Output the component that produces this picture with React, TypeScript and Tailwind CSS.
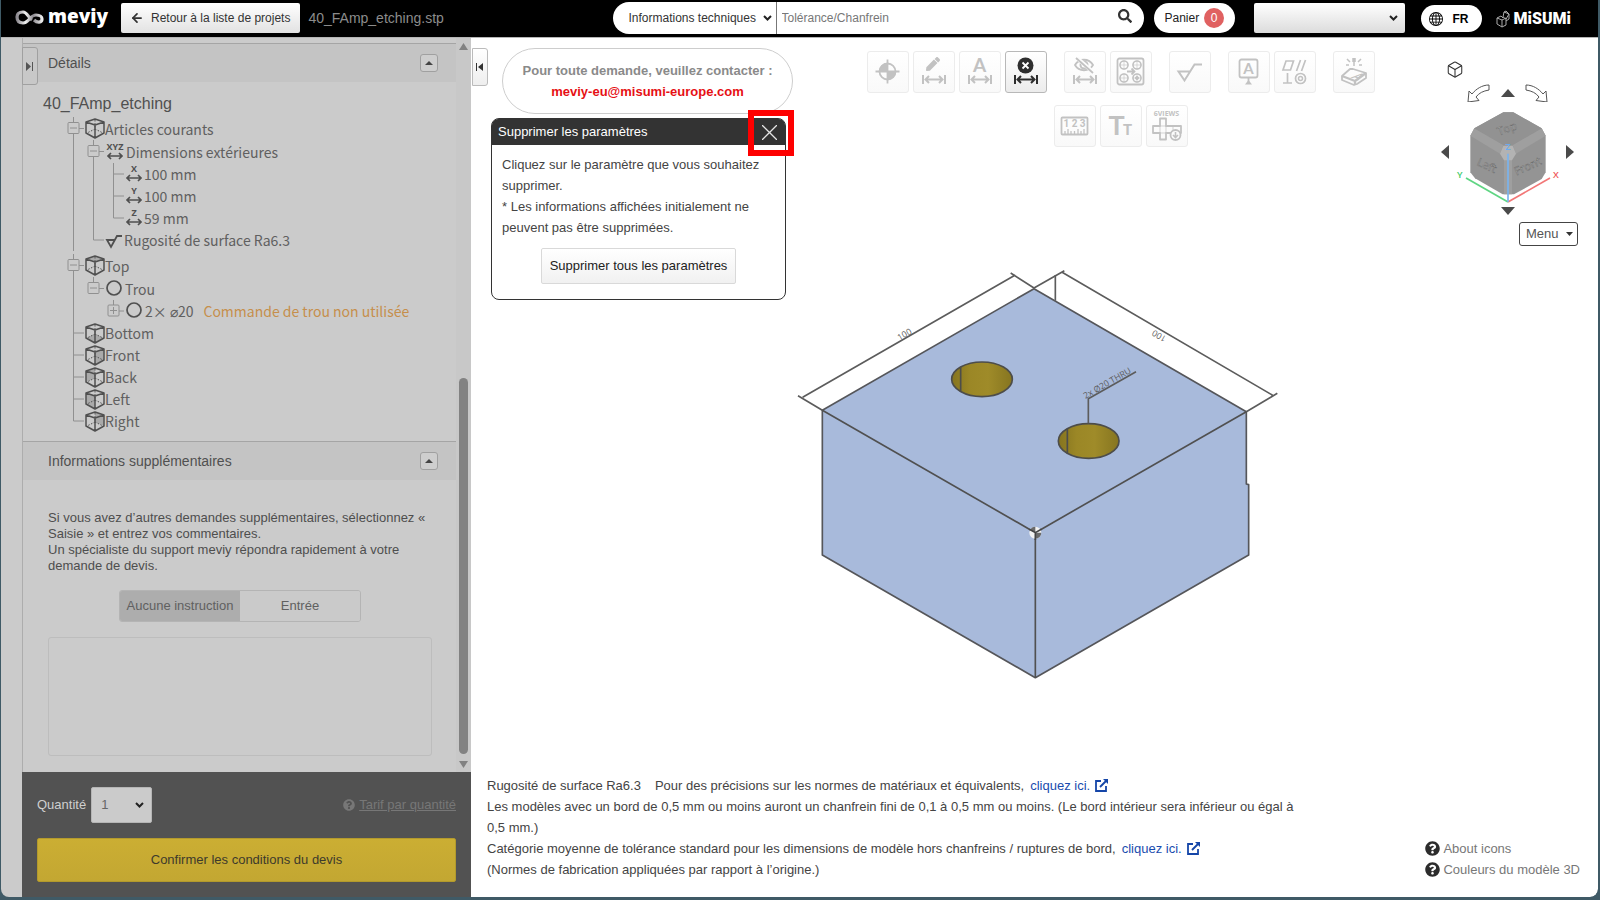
import React, { useState } from "react";
import clsx from "clsx";
import { ArrowLeft, Box } from "lucide-react";
import { BsGlobe } from "react-icons/bs";
import { FaPen, FaQuestionCircle, FaSearch } from "react-icons/fa";

type Guide = "line" | "tee" | "elbow" | "minus" | "minusEnd" | "plus" | "blank";
type Face = "none" | "top" | "bottom" | "front" | "back" | "left" | "right";

interface TreeRow {
  guides: Guide[];
  icon: React.ReactNode;
  label: string;
  note?: string;
  parent?: boolean;
}

const facePoints: Record<Face, string> = {
  none: "",
  top: "10,1 19,4 10,7 1,4",
  bottom: "10,11 19,15 10,20 1,15",
  front: "10,7 19,4 19,15 10,20",
  back: "1,4 10,1 10,11 1,15",
  left: "1,4 10,7 10,20 1,15",
  right: "10,1 19,4 19,15 10,11",
};

const CubeIcon = ({ face = "none" }: { face?: Face }) => (
  <svg width="20" height="21" viewBox="0 0 20 21" fill="none" stroke="#505050">
    <polygon points={facePoints[face]} fill="#aaaaaa" stroke="none" />
    <path
      d="M10 1 L19 4 V15 L10 20 L1 15 V4 Z M1 4 L10 7 L19 4 M10 7 V20"
      strokeWidth="1.5"
      strokeLinejoin="round"
    />
    <path d="M10 2 V11 M10 11 L2 15 M10 11 L18 15" strokeDasharray="1.5 1.5" />
  </svg>
);

const AxisIcon = ({ axis }: { axis: string }) => (
  <svg
    width={axis.length > 1 ? 21 : 19}
    height="20"
    viewBox={axis.length > 1 ? "-1 0 21 20" : "0 0 19 20"}
    className="overflow-visible"
    fill="none"
    stroke="#505050"
    strokeWidth="1.7"
  >
    <text
      x="9"
      y="8"
      textAnchor="middle"
      fontSize="9"
      fontWeight="700"
      fontFamily="Open Sans, sans-serif"
      fill="#505050"
      stroke="none"
    >
      {axis}
    </text>
    <path d="M2 14 H16 M5 11 L2 14 L5 17 M13 11 L16 14 L13 17" />
  </svg>
);

const HoleIcon = () => (
  <svg width="20" height="20" viewBox="0 0 20 20" fill="none">
    <circle cx="9" cy="9" r="7" stroke="#505050" strokeWidth="1.7" />
  </svg>
);

const RoughnessIcon = () => (
  <svg width="19" height="20" viewBox="0 0 19 20" fill="none">
    <path
      d="M10 10 H2 L6 17 L12 6 H17"
      stroke="#505050"
      strokeWidth="1.8"
    />
  </svg>
);

const GuideCell = ({ type }: { type: Guide }) => {
  const boxed = type === "minus" || type === "minusEnd" || type === "plus";
  return (
    <svg className="h-full w-5 shrink-0 overflow-visible" stroke="#909090">
      {(type === "line" || type === "tee" || type === "minus") && (
        <line x1="10.5" y1="0" x2="10.5" y2="100%" />
      )}
      {(type === "elbow" || boxed) && (
        <line x1="10.5" y1="0" x2="10.5" y2="50%" />
      )}
      {(type === "tee" || type === "elbow" || boxed) && (
        <line x1="10.5" y1="50%" x2="21" y2="50%" />
      )}
      {boxed && (
        <svg y="50%" className="overflow-visible">
          <rect x="5" y="-6" width="11" height="11" rx="1" fill="#cbcbcb" />
          <line x1="7" y1="-0.5" x2="14" y2="-0.5" />
          {type === "plus" && <line x1="10.5" y1="-4" x2="10.5" y2="3" />}
        </svg>
      )}
    </svg>
  );
};

const treeGroups: TreeRow[][] = [
  [
    { guides: ["minus"], icon: <CubeIcon />, label: "Articles courants", parent: true },
    {
      guides: ["line", "minus"],
      icon: <AxisIcon axis="XYZ" />,
      label: "Dimensions extérieures",
      parent: true,
    },
    { guides: ["line", "line", "tee"], icon: <AxisIcon axis="X" />, label: "100 mm" },
    { guides: ["line", "line", "tee"], icon: <AxisIcon axis="Y" />, label: "100 mm" },
    { guides: ["line", "line", "elbow"], icon: <AxisIcon axis="Z" />, label: "59 mm" },
    { guides: ["line", "elbow"], icon: <RoughnessIcon />, label: "Rugosité de surface Ra6.3" },
  ],
  [
    { guides: ["minus"], icon: <CubeIcon face="top" />, label: "Top", parent: true },
    { guides: ["line", "minusEnd"], icon: <HoleIcon />, label: "Trou", parent: true },
    {
      guides: ["line", "blank", "plus"],
      icon: <HoleIcon />,
      label: "2× ⌀20",
      note: "Commande de trou non utilisée",
    },
    { guides: ["tee"], icon: <CubeIcon face="bottom" />, label: "Bottom" },
    { guides: ["tee"], icon: <CubeIcon face="front" />, label: "Front" },
    { guides: ["tee"], icon: <CubeIcon face="back" />, label: "Back" },
    { guides: ["tee"], icon: <CubeIcon face="left" />, label: "Left" },
    { guides: ["elbow"], icon: <CubeIcon face="right" />, label: "Right" },
  ],
];

const Tree = () => (
  <div className="flex flex-col gap-[3px] pl-10 font-['Noto_Sans_CJK_JP',sans-serif] text-sm text-[#606060]">
    {treeGroups.map((rows, g) => (
      <ul key={g}>
        {rows.map((row, i) => (
          <li
            key={i}
            className={clsx("flex items-center", row.parent ? "h-[23px]" : "h-[22px]")}
          >
            {row.guides.map((guide, n) => (
              <GuideCell key={n} type={guide} />
            ))}
            <span className="ml-[2px] shrink-0">{row.icon}</span>
            <span className="whitespace-nowrap leading-5">{row.label}</span>
            {row.note && (
              <span className="ml-[10px] whitespace-nowrap leading-5 text-[#c68f4c]">
                {row.note}
              </span>
            )}
          </li>
        ))}
      </ul>
    ))}
  </div>
);

const Chevron = ({ className }: { className?: string }) => (
  <svg
    className={clsx("pointer-events-none absolute", className)}
    width="9"
    height="6"
    viewBox="0 0 9 6"
    fill="none"
  >
    <path d="M1 1 L4.5 4.5 L8 1" stroke="#222" strokeWidth="2" />
  </svg>
);

const Header = () => (
  <header className="flex h-[37px] shrink-0 items-center bg-black pb-[2px] pr-[27px] text-xs">
    <a href="#" className="ml-[14px] flex w-[106px] items-center gap-1 text-white">
      <svg width="29" height="17" viewBox="0 0 29 17" fill="none">
        <defs>
          <linearGradient id="loop" x1="0" x2="1">
            <stop offset="0" stopColor="#8d8a90" />
            <stop offset="0.35" stopColor="#f2f2f2" />
            <stop offset="0.65" stopColor="#8d8a90" />
            <stop offset="1" stopColor="#ececec" />
          </linearGradient>
        </defs>
        <path
          d="M17 11 C13 8 12 3 8 3 C4 3 2 5 2 8 C2 12 4 14 8 14 C14 14 15 6 21 6 C25 6 27 8 27 10 C27 14 22 14 19 11"
          stroke="url(#loop)"
          strokeWidth="3.2"
        />
      </svg>
      <span className="pb-1 font-['Open_Sans',sans-serif] text-[19px] font-extrabold leading-6">
        meviy
      </span>
    </a>
    <button className="flex h-[30px] shrink-0 items-center rounded-xs bg-linear-to-b from-white to-[#e2e2e2] pl-[9px] pr-[10px] text-[#333]">
      <ArrowLeft size={14} strokeWidth={3} className="mr-[7px]" />
      Retour à la liste de projets
    </button>
    <span className="ml-2 whitespace-nowrap text-sm text-[#8c8c8c]">
      40_FAmp_etching.stp
    </span>
    <form className="ml-auto flex h-8 w-[531px] items-center overflow-hidden rounded-full bg-white">
      <div className="relative flex h-full w-[164px] items-center border-r border-[#777]">
        <select
          aria-label="Type de recherche"
          className="h-full w-full appearance-none bg-transparent pl-4 text-[#333] outline-none"
        >
          <option>Informations techniques</option>
        </select>
        <Chevron className="right-1" />
      </div>
      <input
        type="text"
        aria-label="Recherche"
        placeholder="Tolérance/Chanfrein"
        className="h-full flex-1 px-[5px] outline-none placeholder:text-[#777]"
      />
      <button type="button" aria-label="Rechercher" className="mr-3 flex pb-1">
        <FaSearch size={14} color="#333" />
      </button>
    </form>
    <button className="ml-[10px] flex h-[30px] w-[81px] items-center gap-[5px] rounded-full bg-white pl-[11px] text-[#222]">
      Panier
      <span className="flex size-5 items-center justify-center rounded-full bg-[#e06161] text-white">
        0
      </span>
    </button>
    <div className="relative ml-[19px] flex w-[151px] items-center">
      <select
        aria-label="Compte"
        className="h-[30px] w-full appearance-none rounded-xs bg-linear-to-b from-white to-[#dcdcdc] outline-none"
      >
        <option></option>
      </select>
      <Chevron className="right-[7px]" />
    </div>
    <button className="ml-4 mt-[2px] flex h-[27px] w-[61px] items-center gap-[10px] rounded-full bg-white pl-2 font-bold text-black">
      <BsGlobe size={14} />
      FR
    </button>
    <a href="#" className="ml-[14px] mt-[2px] flex items-center gap-1 text-white">
      <svg width="14" height="18" viewBox="0 0 14 18" fill="none" stroke="#aaa">
        <path d="M1 8 L6 10 V17 L1 14 Z M6 10 L10 8 V15 L6 17 M1 8 L5 6 L7 8 M8 2 L13 4 V9 L10 11 M8 2 L7 7 L10 9 L13 4 M8 2 L10 1 L13 4" />
      </svg>
      <span className="font-['Roboto',sans-serif] text-base font-black leading-5">
        MiSUMi
      </span>
    </a>
  </header>
);

const SectionHeader = ({ title }: { title: string }) => (
  <div className="flex h-[39px] items-center justify-between border-t border-[#a5a5a5] bg-[#c4c4c4] pl-[25px] pr-[18px]">
    <h2 className="text-sm text-[#505050]">{title}</h2>
    <button
      aria-label={`Réduire ${title}`}
      className="flex size-[18px] items-center justify-center rounded-[3px] border border-[#a0a0a0] bg-[#cecece]"
    >
      <svg width="8" height="4" viewBox="0 0 8 4">
        <polygon points="0,4 4,0 8,4" fill="#444" />
      </svg>
    </button>
  </div>
);

const Sidebar = () => {
  const [instruction, setInstruction] = useState(false);

  return (
    <aside className="relative flex w-[470px] shrink-0 bg-[#cbcbcb] pl-[21px]">
      <button
        aria-label="Réduire le panneau"
        className="absolute left-[21px] top-[9px] flex h-[38px] w-4 items-center justify-center rounded-r-[3px] border border-[#a0a0a0] bg-[#c8c8c8]"
      >
        <svg width="8" height="9" viewBox="0 0 8 9">
          <path d="M0 0 L5 4.5 L0 9 Z M6 0 H7 V9 H6 Z" fill="#555" />
        </svg>
      </button>
      <div className="flex min-w-0 flex-1 flex-col">
        <div className="flex flex-1 border-l border-[#adadad]">
          <div className="flex-1 pt-[5px]">
            <SectionHeader title="Détails" />
            <div className="pb-[9px] pt-[9px]">
              <h3 className="pl-5 text-base leading-[26px] text-[#505050]">
                40_FAmp_etching
              </h3>
              <Tree />
            </div>
            <SectionHeader title="Informations supplémentaires" />
            <div className="px-6 pb-[15px] pl-[25px] pt-[30px]">
              <p className="-mr-2 text-[13px] leading-4 text-[#4e4e4e]">
                Si vous avez d’autres demandes supplémentaires, sélectionnez «
                Saisie » et entrez vos commentaires.
                <br />
                Un spécialiste du support meviy répondra rapidement à votre
                demande de devis.
              </p>
              <div className="mx-auto mt-4 flex h-8 w-[242px] overflow-hidden rounded-[3px] border border-[#b4b4b4] text-[13px] text-[#606060]">
                <button
                  onClick={() => setInstruction(false)}
                  className={clsx(
                    "flex-1 whitespace-nowrap",
                    instruction ? "bg-[#cacaca]" : "bg-[#adadad]"
                  )}
                >
                  Aucune instruction
                </button>
                <button
                  onClick={() => setInstruction(true)}
                  className={clsx(
                    "flex-1",
                    instruction ? "bg-[#adadad]" : "bg-[#cacaca]"
                  )}
                >
                  Entrée
                </button>
              </div>
              <textarea
                aria-label="Commentaires"
                className="mt-[15px] block h-[119px] w-full resize-none rounded-[3px] border border-[#bdbdbd] p-2 text-[13px] outline-none"
              />
            </div>
          </div>
          <div className="flex w-[15px] flex-col items-center bg-[#c8c8c8] pb-1 pt-[5px]">
            <svg width="9" height="7" viewBox="0 0 9 7">
              <polygon points="0,7 4.5,0 9,7" fill="#828282" />
            </svg>
            <div className="mb-[7px] mt-auto h-[376px] w-[9px] rounded-full bg-[#828282]" />
            <svg width="9" height="7" viewBox="0 0 9 7">
              <polygon points="0,0 4.5,7 9,0" fill="#828282" />
            </svg>
          </div>
        </div>
        <div className="flex h-[125px] flex-col bg-[#525252] px-[15px] pt-[15px] text-[13px]">
          <div className="flex items-center">
            <label htmlFor="quantity" className="mr-[5px] text-[#cfcfcf]">
              Quantité
            </label>
            <div className="relative flex w-[61px] items-center">
              <select
                id="quantity"
                className="h-9 w-full appearance-none rounded-xs border border-[#b5b5b5] bg-[#cbcbcb] pl-[9px] text-[13px] text-[#666] outline-none"
              >
                <option>1</option>
                <option>2</option>
                <option>3</option>
              </select>
              <Chevron className="right-2" />
            </div>
            <a
              href="#"
              className="ml-auto flex items-center gap-1 text-[#777]"
            >
              <FaQuestionCircle size={12} />
              <span className="underline">Tarif par quantité</span>
            </a>
          </div>
          <button className="mt-[15px] h-11 rounded-xs border border-[#b39a2c] bg-linear-to-b from-[#cbae33] to-[#c3a732] text-[#3d3a2c]">
            Confirmer les conditions du devis
          </button>
        </div>
      </div>
    </aside>
  );
};

const DimArrow = () => (
  <path
    d="M10 24 V33 M32 24 V33 M12 28.5 H30 M16 25 L12.5 28.5 L16 32 M26 25 L29.5 28.5 L26 32"
    strokeWidth="2"
  />
);

const textProps = {
  fill: "currentColor",
  stroke: "none",
  textAnchor: "middle" as const,
};

interface Tool {
  label: string;
  active?: boolean;
  icon: React.ReactNode;
}

const toolRow: Tool[][] = [
  [
    {
      label: "Origine",
      icon: (
        <>
          <circle cx="20.5" cy="20.5" r="8" strokeWidth="1.8" />
          <path d="M20.5 8.5 V32.5 M8.5 20.5 H32.5" strokeWidth="1.8" />
          <path
            d="M20.5 20.5 V12 A8.5 8.5 0 0 0 12 20.5 Z M20.5 20.5 V29 A8.5 8.5 0 0 0 29 20.5 Z"
            fill="currentColor"
            stroke="none"
          />
        </>
      ),
    },
    {
      label: "Modifier la cote",
      icon: (
        <>
          <FaPen x="13" y="6" size={14} stroke="none" />
          <DimArrow />
        </>
      ),
    },
    {
      label: "Cote automatique",
      icon: (
        <>
          <text x="20.5" y="21" fontSize="19" fontFamily="Lato, sans-serif" fontWeight="700" {...textProps}>
            A
          </text>
          <DimArrow />
        </>
      ),
    },
    {
      label: "Supprimer les paramètres",
      active: true,
      icon: (
        <>
          <circle cx="20.5" cy="14.5" r="8" fill="currentColor" stroke="none" />
          <path d="M17.5 11.5 L23.5 17.5 M23.5 11.5 L17.5 17.5" stroke="#fff" strokeWidth="1.8" />
          <DimArrow />
        </>
      ),
    },
  ],
  [
    {
      label: "Masquer les cotes",
      icon: (
        <>
          <path d="M11 14 C15 7 25 7 29 14 C25 21 15 21 11 14 Z" strokeWidth="1.8" />
          <circle cx="20" cy="14" r="3.5" strokeWidth="2" />
          <path d="M13 7 L29 21" stroke="#fcfcfc" strokeWidth="4" />
          <path d="M12 7 L29 22" strokeWidth="1.8" />
          <DimArrow />
        </>
      ),
    },
    {
      label: "Groupe de trous",
      icon: (
        <>
          <rect x="7.5" y="7.5" width="26" height="26" rx="2" strokeWidth="1.8" />
          <circle cx="14" cy="14" r="4" strokeWidth="1.6" />
          <circle cx="27" cy="14" r="4" strokeWidth="1.6" />
          <circle cx="14" cy="27" r="4" strokeWidth="1.6" />
          <circle cx="27" cy="27" r="4" strokeWidth="1.6" />
          <circle cx="27" cy="27" r="1.5" fill="currentColor" />
          <path d="M17 20.5 H24 M21.5 17.5 L24.5 20.5 L21.5 23.5" strokeWidth="1.8" />
          <path
            d="M14 9 V19 M9 14 H19 M27 9 V19 M22 14 H32 M14 22 V32 M9 27 H19 M27 22 V32 M22 27 H32"
            strokeWidth="0.6"
          />
        </>
      ),
    },
  ],
  [
    {
      label: "Rugosité",
      icon: <path d="M21 20.5 H9.5 L15.5 29.5 L25.5 13.5 H33" strokeWidth="2" />,
    },
  ],
  [
    {
      label: "Note",
      icon: (
        <>
          <rect x="11.5" y="8.5" width="18" height="18" rx="2" strokeWidth="1.8" />
          <text x="20.5" y="23" fontSize="15" fontFamily="Lato, sans-serif" fontWeight="700" {...textProps}>
            A
          </text>
          <path d="M20.5 27 V32" strokeWidth="1.8" />
          <polygon points="17,33.5 20.5,29 24,33.5" fill="currentColor" stroke="none" />
        </>
      ),
    },
    {
      label: "Tolérance géométrique",
      icon: (
        <>
          <path
            d="M12 10 H19.5 L16.5 19 H9 Z M26.5 9 L22.5 20 M31.5 9 L27.5 20"
            strokeWidth="1.7"
          />
          <path d="M9 32 H18 M13.5 22 V32" strokeWidth="1.7" />
          <circle cx="26.5" cy="27.5" r="5" strokeWidth="1.7" />
          <circle cx="26.5" cy="27.5" r="2" strokeWidth="1.5" />
        </>
      ),
    },
  ],
  [
    {
      label: "Gravure",
      icon: (
        <>
          <path d="M21 7 V11" strokeWidth="3.5" />
          <path
            d="M21 11 V15 M14 8 L17 11 M28 8 L25 11 M13 14 H16 M26 14 H29"
            strokeWidth="1.5"
          />
          <path
            d="M9 25 L17 18 H20 L33 22 V27 L24 33 L21 34 L9 29 Z"
            strokeWidth="1.8"
            strokeLinejoin="round"
          />
          <path d="M9 25 L22 30 L33 22 M22 30 V34" strokeWidth="2.4" strokeLinejoin="round" />
          <text
            transform="translate(21 28) rotate(20) skewX(-38)"
            fontSize="11"
            fontFamily="Lato, sans-serif"
            fontWeight="900"
            {...textProps}
          >
            A
          </text>
        </>
      ),
    },
  ],
];

const toolRow2: Tool[][] = [
  [
    {
      label: "Règle",
      icon: (
        <>
          <rect x="7.5" y="12.5" width="26" height="17" rx="1" strokeWidth="1.8" />
          <text x="20.5" y="22" fontSize="10" fontWeight="700" fontFamily="Roboto, sans-serif" {...textProps}>
            1 2 3
          </text>
          <path
            d="M11 26 V29 M14 24 V29 M17 26 V29 M20.5 26 V29 M24 24 V29 M27 26 V29 M30 24 V29"
            strokeWidth="1.3"
          />
        </>
      ),
    },
    {
      label: "Taille du texte",
      icon: (
        <>
          <text x="16.5" y="30" fontSize="27" fontWeight="700" fontFamily="Lato, sans-serif" {...textProps}>
            T
          </text>
          <text x="27.5" y="30" fontSize="15" fontWeight="900" fontFamily="Lato, sans-serif" {...textProps}>
            T
          </text>
        </>
      ),
    },
    {
      label: "Six vues",
      icon: (
        <>
          <text x="20.5" y="11" fontSize="7" fontWeight="700" fontFamily="Open Sans, sans-serif" {...textProps}>
            6VIEWS
          </text>
          <path
            d="M14 13.5 H20 V21 H35 V28 H20 V34.5 H14 V28 H7 V21 H14 Z"
            strokeWidth="1.8"
            strokeLinejoin="round"
          />
          <path d="M14 21 H20 V28 H14 Z M27 21 V28" strokeWidth="0.7" />
          <circle cx="29.5" cy="30" r="5" fill="#fcfcfc" strokeWidth="1.8" />
          <path d="M29.5 27 V32 M27 30 L29.5 32.5 L32 30" strokeWidth="1.6" />
        </>
      ),
    },
  ],
];

const ToolGroups = ({ groups }: { groups: Tool[][] }) => (
  <div className="flex gap-[17px]">
    {groups.map((group, i) => (
      <div key={i} className="flex gap-1">
        {group.map((tool) => (
          <button
            key={tool.label}
            aria-label={tool.label}
            className={clsx(
              "size-[42px] rounded-[3px] border bg-linear-to-b",
              tool.active
                ? "border-[#b8b8b8] from-white to-[#ececec] text-[#2e2e2e]"
                : "border-[#ececec] from-white to-[#f9f9f9] text-[#c2c2c2]"
            )}
          >
            <svg
              width="40"
              height="40"
              viewBox="1 1 40 40"
              fill="none"
              stroke="currentColor"
            >
              {tool.icon}
            </svg>
          </button>
        ))}
      </div>
    ))}
  </div>
);

const Triangle = ({ label, points }: { label: string; points: string }) => {
  const vertical = label === "Haut" || label === "Bas";
  return (
    <button aria-label={label} className="flex">
      <svg width={vertical ? 14 : 8} height={vertical ? 8 : 14}>
        <polygon points={points} fill="#4a4a4a" />
      </svg>
    </button>
  );
};

const RotateArrow = ({ label, flip }: { label: string; flip?: boolean }) => (
  <button aria-label={label} className={clsx("flex", flip && "-scale-x-100")}>
    <svg width="23" height="18" viewBox="0 0 23 18" fill="#fff" stroke="#555">
      <path d="M22 1 V6 C16 7 12 9 9 13 L12 16.5 L1 18 L2 7 L5 10 C9 5 15 1 22 1 Z" />
    </svg>
  </button>
);

const ViewCube = () => (
  <svg
    width="110"
    height="100"
    viewBox="789 189 330 300"
    className="overflow-visible"
    role="img"
    aria-label="Orientation de la vue"
  >
    <polygon
      points="940,220 970,220 1055,268 1067,290 1067,400 1055,420 972,466 938,466 855,418 841,400 841,290 853,268"
      fill="#949494"
    />
    <polygon points="853,268 940,318 930,344 841,290" fill="#9f9f9f" />
    <polygon points="1055,268 968,318 978,344 1067,290" fill="#9f9f9f" />
    <polygon points="853,268 940,220 970,220 1055,268 968,318 940,318" fill="#929292" />
    <polygon points="942,362 966,362 966,466 942,466" fill="#9f9f9f" />
    <polygon points="930,344 940,320 968,320 978,344 966,364 942,364" fill="#b3b3b3" />
    <g
      fontFamily="Open Sans, sans-serif"
      fontSize="34"
      fill="#c4c4c4"
      stroke="#6a6a6a"
      strokeWidth="1.5"
      textAnchor="middle"
    >
      <text transform="translate(955 280) rotate(-20)">Top</text>
      <text transform="translate(886 390) rotate(24)">Left</text>
      <text transform="translate(1018 392) rotate(-24)">Front</text>
    </g>
    <g strokeWidth="5" fill="none">
      <path d="M954 489 L828 417" stroke="#5fd583" />
      <path d="M954 489 L1080 417" stroke="#f27777" />
      <path d="M954 489 V344" stroke="#7ab4ee" />
    </g>
    <g fontFamily="Open Sans, sans-serif" fontSize="28" fontWeight="600" textAnchor="middle">
      <text x="809" y="416" fill="#3ccc68">
        Y
      </text>
      <text x="1098" y="417" fill="#f05a5a">
        X
      </text>
      <text x="954" y="334" fill="#6aabee">
        Z
      </text>
    </g>
  </svg>
);

const ViewNavigator = () => (
  <nav className="flex w-[157px] shrink-0 flex-col pr-6 pt-[22px]">
    <button aria-label="Vue isométrique" className="ml-[5px] flex h-[18px] w-[18px] items-center">
      <Box size={19} strokeWidth={1.4} color="#333" />
    </button>
    <div className="mt-[6px] flex h-[18px] items-center justify-between px-[26px]">
      <RotateArrow label="Pivoter à gauche" />
      <Triangle label="Haut" points="0,8 7,0 14,8" />
      <RotateArrow label="Pivoter à droite" flip />
    </div>
    <div className="flex items-center justify-between">
      <Triangle label="Gauche" points="8,0 0,7 8,14" />
      <ViewCube />
      <Triangle label="Droite" points="0,0 8,7 0,14" />
    </div>
    <div className="mt-[5px] flex justify-center">
      <Triangle label="Bas" points="0,0 7,8 14,0" />
    </div>
    <button className="-mr-1 mt-[7px] flex h-6 w-[59px] items-center gap-[7px] self-end rounded-[3px] border border-[#444] bg-white pl-[6px] text-[13px] text-[#555]">
      Menu
      <svg width="7" height="4" viewBox="0 0 7 4">
        <polygon points="0,0 3.5,4 7,0" fill="#333" />
      </svg>
    </button>
  </nav>
);

const Hole = ({ cx, cy }: { cx: number; cy: number }) => (
  <g stroke="#4d4d4a" strokeWidth="5">
    <ellipse cx={cx} cy={cy} rx="91" ry="52" fill="url(#hole)" />
    <line x1={cx - 64} y1={cy - 37} x2={cx - 64} y2={cy + 37} />
  </g>
);

const Model = () => (
  <svg
    width="500"
    height="430"
    viewBox="15 9 1500 1290"
    role="img"
    aria-label="Modèle 3D"
  >
    <defs>
      <linearGradient id="hole" x1="0" x2="1">
        <stop offset="0" stopColor="#85741f" />
        <stop offset="0.3" stopColor="#9b8726" />
        <stop offset="0.6" stopColor="#9f8b29" />
        <stop offset="1" stopColor="#867520" />
      </linearGradient>
    </defs>
    <polygon
      points="762,116 1399,485 1399,702 1406,704 1406,915 766,1283 127,915 127,481"
      fill="#a8badb"
      stroke="#55565a"
      strokeWidth="5"
      strokeLinejoin="round"
    />
    <path
      d="M127 481 L766 848 L1399 485 M766 848 V1283"
      fill="none"
      stroke="#505050"
      strokeWidth="5"
    />
    <Hole cx={606} cy={388} />
    <Hole cx={926} cy={573} />
    <g fill="none" stroke="#5c5c5c" strokeWidth="5">
      <path d="M68 442 L706 75 M54 437 L127 481 M692 69 L762 114" />
      <path d="M845 66 L1480 437 M762 114 L853 62 M1399 485 L1492 430" />
      <path d="M826 75 V152 M925 520 V446 L1068 365" />
    </g>
    <g
      fontFamily="Open Sans, sans-serif"
      fontSize="26"
      fill="#5c5c5c"
      textAnchor="middle"
    >
      <text transform="translate(378 261) rotate(-30)">100</text>
      <text transform="translate(1142 250) rotate(210)">100</text>
      <text transform="translate(986 407) rotate(-30)">2x Ø20 THRU</text>
    </g>
    <circle cx="766" cy="848" r="18" fill="#f2f2f2" />
    <path
      d="M766 848 V830 A18 18 0 0 0 750 840 Z M766 848 V866 A18 18 0 0 0 784 848 Z"
      fill="#6a6a6a"
    />
    <path d="M748 838 L766 848 L784 838 M766 848 V870" stroke="#444" strokeWidth="5" fill="none" />
  </svg>
);

const ContactBanner = () => (
  <div className="ml-[31px] mt-[10px] flex h-[66px] w-[291px] flex-col items-center justify-center rounded-full border border-[#cdcdcd] bg-white text-[13px] font-bold leading-[21px]">
    <p className="text-[#8a8a8a]">Pour toute demande, veuillez contacter :</p>
    <a href="mailto:meviy-eu@misumi-europe.com" className="text-[#e60f14]">
      meviy-eu@misumi-europe.com
    </a>
  </div>
);

const DeleteDialog = () => (
  <section className="relative ml-5 mt-1 w-[295px] rounded-lg border border-[#333] bg-white text-[13px]">
    <div className="flex h-[26px] items-center justify-between rounded-t-md bg-[#333] pl-[6px] pr-2 text-white">
      <h2>Supprimer les paramètres</h2>
      <button aria-label="Fermer" className="flex">
        <svg width="15" height="15" viewBox="0 0 15 15" stroke="#e5e5e5">
          <path d="M0 0 L15 15 M15 0 L0 15" strokeWidth="1.3" />
        </svg>
      </button>
    </div>
    {/* highlight around the close button */}
    <div className="pointer-events-none absolute -right-[9px] -top-[9px] h-[46px] w-[46px] border-[6px] border-[#fe0000]" />
    <div className="flex flex-col px-[10px] pb-[15px] pt-[9px] text-[#444]">
      <p className="leading-[21px]">
        Cliquez sur le paramètre que vous souhaitez supprimer.
        <br />* Les informations affichées initialement ne peuvent pas être
        supprimées.
      </p>
      <button className="mx-auto mt-[10px] h-9 w-[195px] whitespace-nowrap rounded-xs border border-[#d9d9d9] bg-linear-to-b from-white to-[#f1f1f1] text-[#222]">
        Supprimer tous les paramètres
      </button>
    </div>
  </section>
);

const ExternalLink = () => (
  <a href="#" className="ml-[6px] inline-flex items-center gap-[5px] text-[#1a4cae]">
    cliquez ici.
    <svg width="13" height="13" viewBox="0 0 13 13" fill="none" stroke="#1546a8">
      <path d="M6 2 H1 V12 H11 V7 M5 8 L11 2" strokeWidth="1.8" />
      <polygon points="8,0 13,0 13,5" fill="#1546a8" stroke="none" />
    </svg>
  </a>
);

const Notes = () => (
  <div className="flex items-end justify-between pb-[17px] pl-4 pr-[18px] text-[13px] leading-[21px]">
    <div className="max-w-[820px] text-[#444]">
      <p>
        <span className="mr-[14px]">Rugosité de surface Ra6.3</span>
        Pour des précisions sur les normes de matériaux et équivalents,
        <ExternalLink />
      </p>
      <p>
        Les modèles avec un bord de 0,5 mm ou moins auront un chanfrein fini de
        0,1 à 0,5 mm ou moins. (Le bord intérieur sera inférieur ou égal à 0,5
        mm.)
      </p>
      <p>
        Catégorie moyenne de tolérance standard pour les dimensions de modèle
        hors chanfreins / ruptures de bord,
        <ExternalLink />
      </p>
      <p>(Normes de fabrication appliquées par rapport à l’origine.)</p>
    </div>
    <ul className="text-[#777]">
      {["About icons", "Couleurs du modèle 3D"].map((item) => (
        <li key={item}>
          <a href="#" className="flex items-center gap-[3px]">
            <FaQuestionCircle size={15} color="#2c2c2c" />
            {item}
          </a>
        </li>
      ))}
    </ul>
  </div>
);

const Viewer = () => (
  <main className="relative min-w-0 flex-1 rounded-br-lg bg-white">
    <div className="absolute inset-0 flex items-center justify-center">
      <Model />
    </div>
    <div className="relative flex h-full flex-col justify-between">
      <div className="flex">
        <div className="relative w-[329px] shrink-0">
          <button
            aria-label="Déplier le panneau"
            className="absolute left-px top-[10px] flex h-[38px] w-4 items-center justify-center rounded-r-[3px] border border-[#bbb] bg-linear-to-b from-white to-[#eee]"
          >
            <svg width="8" height="8" viewBox="0 0 8 8">
              <path d="M0 0 H1 V8 H0 Z M7 0 V8 L2 4 Z" fill="#333" />
            </svg>
          </button>
          <ContactBanner />
          <DeleteDialog />
        </div>
        <div className="flex flex-1 flex-col items-center gap-3 pt-[13px]">
          <ToolGroups groups={toolRow} />
          <ToolGroups groups={toolRow2} />
        </div>
        <ViewNavigator />
      </div>
      <Notes />
    </div>
  </main>
);

const App = () => (
  <div className="flex min-h-screen flex-col bg-[#3f5a66] pb-[3px] pl-px pr-[2px] font-['Liberation_Sans',Arial,sans-serif]">
    <Header />
    <div className="flex flex-1 overflow-hidden rounded-b-lg border-t border-[#b5b5b5]">
      <Sidebar />
      <Viewer />
    </div>
  </div>
);

export default App;
